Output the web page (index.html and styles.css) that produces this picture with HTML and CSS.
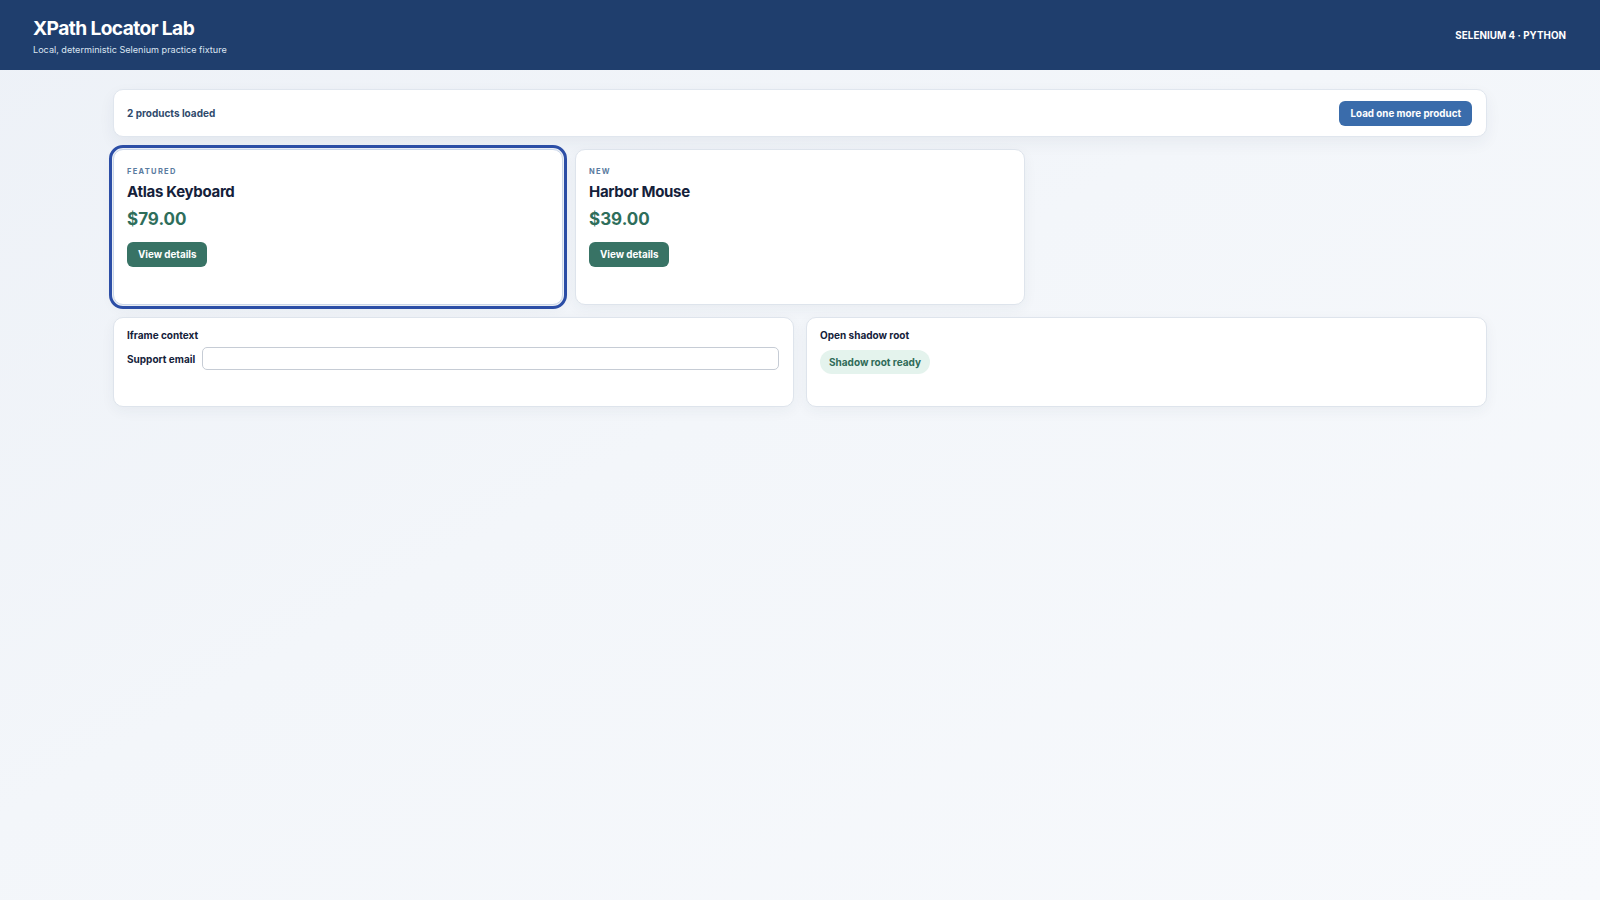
FILE: index.html
```html
<!DOCTYPE html>
<html lang="en">
<head>
<meta charset="utf-8">
<title>XPath Locator Lab</title>
<link rel="stylesheet" href="styles.css">
</head>
<body>
<header class="topbar">
  <div class="brand">
    <h1 class="brand-title">XPath Locator Lab</h1>
    <p class="brand-sub">Local, deterministic Selenium practice fixture</p>
  </div>
  <div class="stack">SELENIUM 4 · PYTHON</div>
</header>
<main class="main">
  <section class="toolbar">
    <span class="count">2 products loaded</span>
    <button class="btn btn-primary" type="button">Load one more product</button>
  </section>
  <section class="products">
    <article class="card product is-featured">
      <div class="tag">FEATURED</div>
      <h2 class="name">Atlas Keyboard</h2>
      <div class="price">$79.00</div>
      <button class="btn btn-green" type="button">View details</button>
    </article>
    <article class="card product">
      <div class="tag">NEW</div>
      <h2 class="name">Harbor Mouse</h2>
      <div class="price">$39.00</div>
      <button class="btn btn-green" type="button">View details</button>
    </article>
  </section>
  <section class="panels">
    <div class="card panel">
      <div class="panel-title">Iframe context</div>
      <label class="field">
        <span class="field-label">Support email</span>
        <input class="field-input" type="email">
      </label>
    </div>
    <div class="card panel">
      <div class="panel-title">Open shadow root</div>
      <span class="badge">Shadow root ready</span>
    </div>
  </section>
</main>
</body>
</html>
```
FILE: styles.css
```css
* { box-sizing: border-box; }
html, body { margin: 0; padding: 0; }
body {
  font-family: Inter, "Noto Sans", "Liberation Sans", sans-serif;
  color: #14213a;
  min-height: 900px;
  background: linear-gradient(150deg, #edf1f7 0%, #f3f6fa 45%, #f7f9fc 100%);
}
.topbar {
  height: 70px;
  background: #1f3e6d;
  color: #ffffff;
  display: flex;
  align-items: center;
  justify-content: space-between;
  padding: 0 34px 0 33px;
}
.brand-title {
  margin: 0;
  font-size: 19.2px;
  font-weight: 700;
  letter-spacing: -0.6px;
  line-height: 24px;
  padding-top: 2px;
}
.brand-sub {
  margin: 3px 0 0;
  font-size: 9.1px;
  line-height: 13px;
  color: #dbe5f2;
}
.stack {
  font-size: 9.8px;
  font-weight: 700;
  letter-spacing: 0.05px;
  margin-top: 1px;
}
.main {
  max-width: 1374px;
  margin: 0 auto;
  padding-top: 19px;
  display: flex;
  flex-direction: column;
  gap: 12px;
}
.card {
  background: #ffffff;
  border: 1px solid #dee4ec;
  border-radius: 10px;
  box-shadow: 0 4px 14px rgba(30, 50, 80, 0.05);
}
.toolbar {
  background: #ffffff;
  border: 1px solid #e0e6ee;
  border-radius: 10px;
  box-shadow: 0 6px 16px rgba(30, 50, 80, 0.06);
  height: 48px;
  padding: 0 14px 0 13px;
  display: flex;
  align-items: center;
  justify-content: space-between;
}
.count {
  font-size: 10px;
  font-weight: 700;
  color: #2f4a6c;
}
.btn {
  border: 0;
  border-radius: 6px;
  color: #ffffff;
  font-family: inherit;
  font-size: 9.8px;
  font-weight: 700;
  height: 25px;
  padding: 0 11px;
  cursor: pointer;
}
.btn-primary { background: #3a6cab; }
.btn-green { background: #387365; }
.products {
  display: grid;
  grid-template-columns: repeat(3, 1fr);
  gap: 12px;
}
.product {
  min-height: 156px;
  padding: 17px 14px 14px 13px;
  display: flex;
  flex-direction: column;
  align-items: flex-start;
}
.is-featured {
  outline: 3px solid #2c4ea6;
  outline-offset: 1px;
  border-color: #c9d6ea;
}
.tag {
  font-size: 7.5px;
  font-weight: 700;
  letter-spacing: 1.3px;
  color: #5a7ca0;
  line-height: 10px;
}
.name {
  margin: 6px 0 0;
  font-size: 15px;
  font-weight: 650;
  letter-spacing: -0.3px;
  line-height: 18px;
  color: #14213a;
}
.price {
  margin-top: 8px;
  font-size: 17px;
  font-weight: 750;
  line-height: 20px;
  color: #2e6e5b;
}
.btn-green { margin-top: 13px; padding: 0 11px; }
.panels {
  display: grid;
  grid-template-columns: 1fr 1fr;
  gap: 12px;
}
.panel {
  height: 90px;
  padding: 10px 14px 11px 13px;
}
.panel-title {
  font-size: 10px;
  font-weight: 700;
  color: #14213a;
  line-height: 14px;
}
.field {
  display: flex;
  align-items: center;
  gap: 7px;
  margin-top: 5px;
}
.field-label {
  font-size: 10px;
  font-weight: 700;
  color: #14213a;
  white-space: nowrap;
}
.field-input {
  flex: 1;
  height: 23px;
  border: 1px solid #c6ccd5;
  border-radius: 5px;
  background: #ffffff;
  font-family: inherit;
}
.badge {
  display: inline-flex;
  align-items: center;
  margin-top: 8px;
  height: 24px;
  padding: 0 9px;
  border-radius: 12px;
  background: #e4f3ed;
  color: #2f6b58;
  font-size: 10px;
  font-weight: 700;
}
```
